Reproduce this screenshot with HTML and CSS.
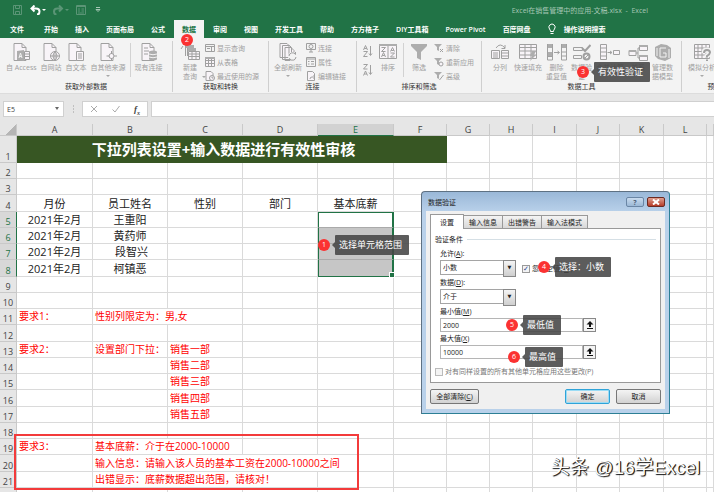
FILE: index.html
```
<!DOCTYPE html>
<html lang="zh-CN">
<head>
	<meta charset="UTF-8">
	<title>Excel在销售管理中的应用-文稿.xlsx - Excel</title>
	<meta name="viewport" content="width=device-width, initial-scale=1.0">
	<link rel="stylesheet" href="styles.css">
</head>
<body>
<svg class="defs" aria-hidden="true">
	<symbol id="page" viewBox="0 0 18 18"><path class="f" d="M2 .5h8l4 4v13H2z"/><path d="M10 .5v4h4"/></symbol>
	<symbol id="up" viewBox="0 0 8 8"><path class="k" d="M4 0l3.500 3.500H5V6H3V3.500H.5zM1 7h6v1H1z"/></symbol>
</svg>
<div class="app">
	<header class="titlebar">
		<div class="quick">
			<button class="dim" aria-label="保存"><svg width="10" height="10" viewBox="0 0 10 10"><path d="M.5.5h8v9h-8zM2.500.5v3h4v-3M2.500 9.500v-3h4v3"/></svg></button>
			<button aria-label="撤消"><svg width="16" height="10" viewBox="0 0 16 10"><path class="bold" d="M4.500.5L1.500 3.500l3 3M1.500 3.500h4.500q3.500 0 3.500 3t-2.500 3"/><path class="w" d="M12 4h4l-2 2z"/></svg></button>
			<button class="dim" aria-label="恢复"><svg width="16" height="10" viewBox="0 0 16 10"><path class="bold" d="M6 .5l3 3-3 3M9 3.500H4.500Q1 3.500 1 6.500t2.500 3"/><path class="w" d="M12 4h4l-2 2z"/></svg></button>
			<button class="dim" aria-label="记录单"><svg width="10" height="10" viewBox="0 0 10 10"><path d="M.5.5h9v9h-9zM0 1.500h10M2 4h2M5.500 4H8M2 6h2M5.500 6H8M2 8h6"/></svg></button>
			<button class="more" aria-label="自定义"><svg width="6" height="6" viewBox="0 0 6 6"><path d="M1 .5h4M1 2.500h4l-2 2z"/></svg></button>
		</div>
		<h1>Excel在销售管理中的应用-文稿.xlsx &nbsp;-&nbsp; Excel</h1>
	</header>
	<nav class="tabs">
		<button class="file">文件</button>
		<button>开始</button>
		<button>插入</button>
		<button>页面布局</button>
		<button>公式</button>
		<button class="on">数据</button>
		<button>审阅</button>
		<button>视图</button>
		<button>开发工具</button>
		<button>帮助</button>
		<button>方方格子</button>
		<button>DIY工具箱</button>
		<button>Power Pivot</button>
		<button>百度网盘</button>
		<button class="tell"><svg width="8" height="12" viewBox="0 0 8 12"><path d="M2.500 8.500Q2.500 7 1.500 6A3.100 3.100 0 1 1 6.500 6Q5.500 7 5.500 8.500zM2.500 10.500h3"/></svg>操作说明搜索</button>
	</nav>

	<section class="ribbon">
		<div class="group g-ext">
			<div class="tools">
				<button class="big"><svg width="18" height="18" viewBox="0 0 18 18"><use href="#page"/><path class="d" d="M5 8l7-1v11l-7-1z"/><path class="l" d="M7 15l1.500-5 1.500 5M7.500 13.500h2"/><path class="f" d="M12.500 8.500h5v8h-5zM12.500 11h5M12.500 13.500h5"/></svg>自 Access</button>
				<button class="big"><svg width="18" height="18" viewBox="0 0 18 18"><use href="#page"/><circle class="f" cx="13" cy="13" r="4.500"/><path d="M8.500 13h9M13 8.500v9M13 8.500q-4 4.500 0 9q4-4.500 0-9"/></svg>自网站</button>
				<button class="big"><svg width="18" height="18" viewBox="0 0 18 18"><use href="#page"/><path class="f" d="M9.500 8.500h7v9h-7zM11 11h4M11 13h4M11 15h4"/></svg>自文本</button>
				<button class="big"><svg width="18" height="18" viewBox="0 0 18 18"><use href="#page"/><circle class="f" cx="12.500" cy="13" r="2.500"/><path d="M12.500 8v3M12.500 15v3M7.500 13h3M15 13h3"/></svg>自其他来源<i class="drop"></i></button>
				<hr>
				<button class="big"><svg width="18" height="18" viewBox="0 0 18 18"><use href="#page"/><path d="M4 5h4M4 8h5M4 11h4"/><path class="d" d="M9 8.500q4.500-2 8 0v8q-3.500 2-8 0z"/><path class="l" d="M9 11q4 1.500 8 0M9 14q4 1.500 8 0"/></svg>现有连接</button>
			</div>
			<h2>获取外部数据</h2>
		</div>
		<div class="group g-get">
			<div class="tools">
				<button class="big"><svg width="20" height="18" viewBox="0 0 20 18"><path class="d" d="M5 2h9v3H5zM7 5h9v3H7z"/><path d="M1 6l2-3M5.500 2v11M7.500 5v8"/><path class="f" d="M8.500 8.500h11v8h-11zM8.500 11h11M8.500 13.500h11M12 8.500v8M16 8.500v8"/></svg>新建<br>查询<i class="drop side"></i></button>
				<div class="list">
					<button><svg width="10" height="10" viewBox="0 0 10 10"><path d="M.5 1.500h9v7h-9zM.5 3.500h9M6.500 3.500v5M2 5.500h3"/></svg>显示查询</button>
					<button><svg width="10" height="10" viewBox="0 0 10 10"><path class="f" d="M.5.5h9v9h-9zM.5 3.500h9M.5 6.500h9M3.500.5v9M6.500.5v9"/><path class="d" d="M0 0h10v2H0z"/></svg>从表格</button>
					<button><svg width="10" height="10" viewBox="0 0 10 10"><path class="f" d="M1 .5h5l2 2v7H1z"/><circle class="f" cx="7" cy="7" r="2.500"/><path d="M7 5.500V7h1.500"/></svg>最近使用的源</button>
				</div>
			</div>
			<h2>获取和转换</h2>
		</div>
		<div class="group g-link">
			<div class="tools">
				<button class="big"><svg width="18" height="18" viewBox="0 0 18 18"><path class="f" d="M1 .5h7l2 2v12H1zM3.500 2.500h7l2 2v12h-9zM6 4.500h6l3 3v10H6z"/><circle class="bg" cx="13.500" cy="13.500" r="4.500"/><path d="M10 13a3.500 3.500 0 0 1 6.500-1.500V9M17 14a3.500 3.500 0 0 1-6.500 1.500V18"/></svg>全部刷新<i class="drop"></i></button>
				<div class="list">
					<button><svg width="10" height="10" viewBox="0 0 10 10"><path d="M.5.5h9v6h-9z"/><circle cx="5" cy="3.500" r="2"/><path d="M5 6v3M3 9h4"/></svg>连接</button>
					<button><svg width="10" height="10" viewBox="0 0 10 10"><path d="M.5.5h9v9h-9zM.5 2h9M2 4.500h1.500M5 4.500h3M2 7h1.500M5 7h3"/></svg>属性</button>
					<button><svg width="10" height="10" viewBox="0 0 10 10"><path class="f" d="M1.500.5h5l2 2v7h-7z"/><path d="M4 8q0-2 2-2h3M7.500 4.500L9 6 7.500 7.500"/></svg>编辑链接</button>
				</div>
			</div>
			<h2>连接</h2>
		</div>
		<div class="group g-sort">
			<div class="tools">
				<div class="az">
					<button aria-label="升序"><svg width="10" height="12" viewBox="0 0 10 12"><path d="M.5 5L2.500.5l2 4.500M1.200 3.500h2.600M.5 6.500h4l-4 5h4M7.500 1v9M6 8.500l1.500 2L9 8.500"/></svg></button>
					<button aria-label="降序"><svg width="10" height="12" viewBox="0 0 10 12"><path d="M.5.5h4l-4 4.500h4M.5 11.500L2.500 7l2 4.500M1.200 10h2.600M7.500 1v9M6 8.500l1.500 2L9 8.500"/></svg></button>
				</div>
				<button class="big"><svg width="18" height="18" viewBox="0 0 18 18"><path class="f" d="M.5 1.500h17v14H.5zM9 1v15"/><path class="d" d="M0 1h18v2H0z"/><path d="M2.500 4.500h4l-4 4h4M2.500 14l2-4.500 2 4.500M3.200 12.500h2.600M11.500 8.500l2-4 2 4M12.200 7.500h2.600M11.500 10h4l-4 4h4"/></svg>排序</button>
				<hr>
				<button class="big"><svg width="18" height="18" viewBox="0 0 18 18"><path class="d" d="M1 1h16v2l-6 6v8l-4-2V9L1 3z"/></svg>筛选</button>
				<div class="list">
					<button><svg width="10" height="10" viewBox="0 0 10 10"><path class="d" d="M0 1h8L5 4v4L3 7V4z"/><path d="M6 6l3 3M9 6L6 9"/></svg>清除</button>
					<button><svg width="10" height="10" viewBox="0 0 10 10"><path class="d" d="M0 1h8L5 4v4L3 7V4z"/><circle class="f" cx="7" cy="7" r="2"/></svg>重新应用</button>
					<button><svg width="10" height="10" viewBox="0 0 10 10"><path class="d" d="M0 1h8L5 4v4L3 7V4z"/><path d="M9.500 4L5.500 9"/></svg>高级</button>
				</div>
			</div>
			<h2>排序和筛选</h2>
		</div>
		<div class="group g-data">
			<div class="tools">
				<button class="big"><svg width="20" height="18" viewBox="0 0 20 18"><path class="f" d="M1.500 7.500h8v8h-8zM3 10h5M3 12h5M3 14h5M11.500 7.500h7v8h-7zM11.500 10h7M11.500 13h7"/><path d="M6 5q4-6 9 0M15 2v3.500h-3.500"/></svg>分列</button>
				<button class="big"><svg width="20" height="18" viewBox="0 0 20 18"><path class="f" d="M1.500 1.500h17v14h-17zM1.500 4.500h17M1.500 8h17M1.500 12h17M7 1.500v14M13 1.500v14"/><path class="d" d="M14 8h4l-2 4h2l-6 6 2-5h-2z"/></svg>快速填充</button>
				<button class="big"><svg width="20" height="18" viewBox="0 0 20 18"><path class="d" d="M0 1h6v4H0zM0 9h6v4H0zM14 1h6v4h-6z"/><path d="M.5 1v16h5V1M.5 13.500h5M14.500 1v16h5V1M14.500 9h5M14.500 13h5M7 9.500h5M10.500 8l2 1.500-2 1.500"/></svg>删除<br>重复值</button>
				<button class="big"><svg width="18" height="18" viewBox="0 0 18 18"><path d="M.5 4.500h9v3h-9zM.5 12.500h8v3h-8z"/><path class="bold" d="M9 5l3 3 5.500-6"/><circle class="bold" cx="13.500" cy="13.500" r="3"/><path d="M11.500 15.500l4-4"/></svg>数据验<br>证</button>
				<button class="big"><svg width="20" height="18" viewBox="0 0 20 18"><path class="f" d="M.5 1.500h6v15h-6zM.5 5h6M.5 9h6M.5 13h6M13.500 7.500h6v4h-6z"/><path d="M7.500 9.500h4M10 8l2 1.500-2 1.500"/></svg>合并计算</button>
				<button class="big"><svg width="20" height="18" viewBox="0 0 20 18"><path class="f" d="M1 7.500h7v5H1zM11.500 2.500h8v5h-8zM11.500 12.500h8v5h-8z"/><path class="d" d="M1 7h7v2H1zM11 2h8.500v2H11zM11 12h8.500v2H11z"/><path d="M8 10h2V5h1M10 10v5h1"/></svg>关系</button>
				<button class="big"><svg width="18" height="18" viewBox="0 0 18 18"><path class="d" d="M1 4l6-3 6 1 4 3v10l-6 3-7-2-3-3z"/><path class="l" d="M12 5H6v9h6v-4H9M3 5v8M15 6v9"/></svg>管理数<br>据模型</button>
			</div>
			<h2>数据工具</h2>
		</div>
		<div class="group g-what">
			<div class="tools">
				<button class="big"><svg width="18" height="18" viewBox="0 0 18 18"><path class="f" d="M1.500 1.500h15v14h-15zM1.500 5h15M1.500 8.500h15M1.500 12h15M5 1.500v14M9 1.500v14M13 1.500v14"/><path class="halo" d="M11 10q0-3 3-3t3 2.500q0 1.500-3 3.500v1.500"/><path class="bold" d="M11 10q0-3 3-3t3 2.500q0 1.500-3 3.500v1.500M14 16.500v1.500"/></svg>模拟分析<i class="drop"></i></button>
			</div>
			<h2>预测</h2>
		</div>
	</section>

	<div class="formula">
		<div class="namebox"><select aria-label="名称框"><option>E5</option></select></div>
		<span class="dots"></span>
		<div class="fx">
			<button aria-label="取消输入"><svg width="8" height="8" viewBox="0 0 8 8"><path d="M1 1l6 6M7 1L1 7"/></svg></button>
			<button aria-label="输入"><svg width="8" height="8" viewBox="0 0 8 8"><path d="M.5 4.500L3 7l4.500-6"/></svg></button>
			<button class="fn">f<sub>x</sub></button>
		</div>
		<input class="bar" type="text" aria-label="编辑栏">
	</div>

	<main class="sheet">
		<table>
			<colgroup>
				<col class="c-head"><col class="c-e"><col class="c-b"><col class="c-b"><col class="c-b"><col class="c-e"><col class="c-f">
				<col class="c-g"><col class="c-g"><col class="c-i"><col class="c-g"><col class="c-i"><col class="c-g"><col>
			</colgroup>
			<thead>
				<tr><th class="corner"></th><th>A</th><th>B</th><th>C</th><th>D</th><th class="on">E</th><th>F</th><th>G</th><th>H</th><th>I</th><th>J</th><th>K</th><th>L</th><th></th></tr>
			</thead>
			<tbody>
				<tr class="top"><th>1</th><td class="banner" colspan="6">下拉列表设置+输入数据进行有效性审核</td><td></td><td></td><td></td><td></td><td></td><td></td><td></td></tr>
				<tr><th>2</th><td></td><td></td><td></td><td></td><td></td><td></td><td></td><td></td><td></td><td></td><td></td><td></td><td></td></tr>
				<tr><th>3</th><td></td><td></td><td></td><td></td><td></td><td></td><td></td><td></td><td></td><td></td><td></td><td></td><td></td></tr>
				<tr><th>4</th><td>月份</td><td>员工姓名</td><td>性别</td><td>部门</td><td>基本底薪</td><td></td><td></td><td></td><td></td><td></td><td></td><td></td><td></td></tr>
				<tr class="on"><th>5</th><td>2021年2月</td><td>王重阳</td><td></td><td></td><td class="sel first"></td><td></td><td></td><td></td><td></td><td></td><td></td><td></td><td></td></tr>
				<tr class="on"><th>6</th><td>2021年2月</td><td>黄药师</td><td></td><td></td><td class="sel"></td><td></td><td></td><td></td><td></td><td></td><td></td><td></td><td></td></tr>
				<tr class="on"><th>7</th><td>2021年2月</td><td>&nbsp;段智兴</td><td></td><td></td><td class="sel"></td><td></td><td></td><td></td><td></td><td></td><td></td><td></td><td></td></tr>
				<tr class="on"><th>8</th><td>2021年2月</td><td>柯镇恶</td><td></td><td></td><td class="sel last"></td><td></td><td></td><td></td><td></td><td></td><td></td><td></td><td></td></tr>
				<tr><th>9</th><td></td><td></td><td></td><td></td><td></td><td></td><td></td><td></td><td></td><td></td><td></td><td></td><td></td></tr>
				<tr><th>10</th><td></td><td></td><td></td><td></td><td></td><td></td><td></td><td></td><td></td><td></td><td></td><td></td><td></td></tr>
				<tr class="note"><th>11</th><td>要求1：</td><td colspan="2">性别列限定为：男,女</td><td></td><td></td><td></td><td></td><td></td><td></td><td></td><td></td><td></td><td></td></tr>
				<tr><th>12</th><td></td><td></td><td></td><td></td><td></td><td></td><td></td><td></td><td></td><td></td><td></td><td></td><td></td></tr>
				<tr class="note"><th>13</th><td>要求2：</td><td>设置部门下拉：</td><td>销售一部</td><td></td><td></td><td></td><td></td><td></td><td></td><td></td><td></td><td></td><td></td></tr>
				<tr class="note"><th>14</th><td></td><td></td><td>销售二部</td><td></td><td></td><td></td><td></td><td></td><td></td><td></td><td></td><td></td><td></td></tr>
				<tr class="note"><th>15</th><td></td><td></td><td>销售三部</td><td></td><td></td><td></td><td></td><td></td><td></td><td></td><td></td><td></td><td></td></tr>
				<tr class="note"><th>16</th><td></td><td></td><td>销售四部</td><td></td><td></td><td></td><td></td><td></td><td></td><td></td><td></td><td></td><td></td></tr>
				<tr class="note"><th>17</th><td></td><td></td><td>销售五部</td><td></td><td></td><td></td><td></td><td></td><td></td><td></td><td></td><td></td><td></td></tr>
				<tr><th>18</th><td></td><td></td><td></td><td></td><td></td><td></td><td></td><td></td><td></td><td></td><td></td><td></td><td></td></tr>
				<tr class="note"><th>19</th><td>要求3：</td><td colspan="2">基本底薪：介于在2000-10000</td><td></td><td></td><td></td><td></td><td></td><td></td><td></td><td></td><td></td><td></td></tr>
				<tr class="note"><th>20</th><td></td><td colspan="4">输入信息：请输入该人员的基本工资在2000-10000之间</td><td></td><td></td><td></td><td></td><td></td><td></td><td></td><td></td></tr>
				<tr class="note"><th>21</th><td></td><td colspan="3">出错显示：底薪数据超出范围，请核对！</td><td></td><td></td><td></td><td></td><td></td><td></td><td></td><td></td><td></td></tr>
				<tr><th></th><td></td><td></td><td></td><td></td><td></td><td></td><td></td><td></td><td></td><td></td><td></td><td></td><td></td></tr>
			</tbody>
		</table>
	</main>

	<div class="frame"></div>

	<section class="dialog" role="dialog" aria-label="数据验证">
		<div class="caption">
			<h3>数据验证</h3>
			<button class="help" aria-label="帮助">?</button>
			<button class="close" aria-label="关闭"><svg width="8" height="6" viewBox="0 0 8 6"><path d="M1 .5l6 5M7 .5l-6 5"/></svg></button>
		</div>
		<form class="inner">
			<div class="dtabs">
				<button type="button" class="on">设置</button>
				<button type="button">输入信息</button>
				<button type="button">出错警告</button>
				<button type="button">输入法模式</button>
			</div>
			<div class="panel">
				<div class="legend">验证条件</div>
				<div class="fields">
					<label for="allow">允许(<u>A</u>):</label>
					<div class="row">
						<div class="combo"><select id="allow"><option>小数</option></select></div>
						<label class="check"><input type="checkbox" checked>忽略空值(<u>B</u>)</label>
					</div>
					<label for="data">数据(<u>D</u>):</label>
					<div class="combo"><select id="data"><option>介于</option></select></div>
					<label for="min">最小值(<u>M</u>)</label>
					<div class="ref"><input id="min" type="text" value="2000"><button type="button" aria-label="选择区域"><svg width="8" height="8"><use href="#up"/></svg></button></div>
					<label for="max">最大值(<u>X</u>)</label>
					<div class="ref"><input id="max" type="text" value="10000"><button type="button" aria-label="选择区域"><svg width="8" height="8"><use href="#up"/></svg></button></div>
				</div>
				<label class="check off"><input type="checkbox" disabled>对有同样设置的所有其他单元格应用这些更改(P)</label>
			</div>
			<div class="actions">
				<button type="button" class="clear">全部清除(<u>C</u>)</button>
				<button type="button" class="ok">确定</button>
				<button type="button">取消</button>
			</div>
		</form>
	</section>

	<div class="callout n1"><b>1</b><span>选择单元格范围</span></div>
	<div class="callout n2"><b>2</b></div>
	<div class="callout n3"><b>3</b><span>有效性验证</span></div>
	<div class="callout n4"><b>4</b><span>选择：小数</span></div>
	<div class="callout n5"><b>5</b><span>最低值</span></div>
	<div class="callout n6"><b>6</b><span>最高值</span></div>
	<div class="mark">头条 @16学Excel</div>
</div>
</body>
</html>
```
FILE: styles.css
```
*{
	margin:0;
	padding:0;
	box-sizing:border-box;
}
html,body{
	height:100%;
	overflow:hidden;
}
body,button,input,select{
	font-family:"Open Sans","Noto Sans CJK SC",sans-serif;
	font-size:7px;
	line-height:9px;
}
button{
	border:none;
	background:none;
	color:inherit;
	white-space:nowrap;
}
svg{
	display:block;
	flex:none;
	fill:none;
	stroke:currentColor;
}
.defs{
	position:absolute;
	width:0;
	height:0;
}
.app{
	position:relative;
	height:100%;
	display:flex;
	flex-direction:column;
	overflow:hidden;
	background:#e6e6e6;
}

/* title bar and tabs */
.titlebar{
	flex:none;
	height:20px;
	display:flex;
	align-items:center;
	justify-content:space-between;
	padding:0 66px 0 13px;
	background:#217346;
	color:#fff;
}
.titlebar h1{
	font-size:7px;
	font-weight:normal;
	color:#a6c7b5;
}
.quick{
	display:flex;
	align-items:center;
	gap:7px;
}
.quick .dim{
	color:#5b9576;
}
.quick .more{
	color:#a6c7b5;
	margin-left:2px;
}
.bold{
	stroke-width:2;
}
.w{
	fill:currentColor;
	stroke:none;
}
.tabs{
	flex:none;
	height:18px;
	display:flex;
	gap:1px;
	background:#217346;
	color:#fff;
}
.tabs button{
	padding:0 8px;
	font-weight:600;
}
.tabs .file{
	padding:0 11px 0 10px;
}
.tabs .on{
	background:#f3f3f3;
	color:#217346;
}
.tabs .tell{
	display:flex;
	align-items:center;
	gap:8px;
}

/* ribbon */
.ribbon{
	height:56px;
	flex:none;
	display:flex;
	overflow:hidden;
	background:#f3f3f3;
	border-bottom:1px solid #dcdcdc;
	color:#a0a0a0;
}
.group{
	flex:none;
	display:flex;
	flex-direction:column;
	justify-content:space-between;
	margin:3px 0 1px;
	border-right:1px solid #cfcfcf;
}
.g-ext{width:173px;}
.g-get{width:96px;}
.g-link{width:88px;}
.g-sort{width:125px;}
.g-data{width:200px;}
.g-what{width:66px;}
.group h2{
	font-size:7px;
	line-height:10px;
	font-weight:normal;
	text-align:center;
	color:#333;
}
.tools{
	display:flex;
	align-items:flex-start;
	gap:4px;
	padding:2px 0 0 6px;
}
.tools hr{
	width:1px;
	height:34px;
	border:none;
	background:#d2d2d2;
}
.big{
	display:flex;
	flex-direction:column;
	align-items:center;
	position:relative;
}
.big svg{
	margin-bottom:2px;
}
.drop{
	border:2px solid transparent;
	border-top-color:#a8a8a8;
	border-bottom:none;
	margin-top:3px;
}
.drop.side{
	position:absolute;
	right:-6px;
	bottom:3px;
}
.list{
	display:flex;
	flex-direction:column;
	gap:4px;
}
.list button{
	height:10px;
	display:flex;
	align-items:center;
	gap:2px;
}
.f{fill:#f8f4f8;}
.d{fill:#adadad;stroke:none;}
.l{stroke:#f3f3f3;}
.bg{fill:#f3f3f3;stroke:none;}
.halo{stroke:#f3f3f3;stroke-width:5;}
.k{fill:#111;stroke:none;}
.g-get .tools{
	gap:5px;
	padding-left:7px;
}
.g-link .tools{
	padding-left:5px;
}
.az{
	display:flex;
	flex-direction:column;
	gap:7px;
	padding-top:2px;
}
.g-sort .tools{
	gap:6px;
}
.g-data .tools{
	padding-left:8px;
}

/* formula bar */
.formula{
	flex:none;
	height:30px;
	display:flex;
	align-items:stretch;
	padding:7px 0;
	gap:3px;
}
.namebox{
	width:61px;
	margin-left:3px;
	background:#fff;
	border:1px solid #d0d0d0;
	position:relative;
}
.namebox select{
	width:100%;
	height:100%;
	appearance:none;
	border:none;
	background:none;
	padding-left:3px;
	color:#444;
}
.namebox::after{
	content:'';
	position:absolute;
	right:4px;
	top:5px;
	border:2px solid transparent;
	border-top:3px solid #666;
	border-bottom:none;
	pointer-events:none;
}
.dots{
	width:12px;
	margin:4px 0;
	background:radial-gradient(circle,#999 1px,transparent 1px) center/3px 3px repeat-y;
}
.fx{
	width:66px;
	display:flex;
	align-items:center;
	justify-content:space-around;
	background:#fff;
	border:1px solid #d0d0d0;
	color:#aaa;
}
.fx .fn{
	font:italic bold 9px/10px "Liberation Serif",serif;
	color:#444;
}
.fn sub{
	font-size:6px;
	line-height:1px;
}
.bar{
	flex:1;
	min-width:0;
	background:#fff;
	border:1px solid #d0d0d0;
	border-right:none;
	padding:0 4px;
}

/* sheet */
.sheet{
	flex:none;
	background:#fff;
}
table{
	width:100%;
	table-layout:fixed;
	border-collapse:separate;
	border-spacing:0;
}
.c-head{width:17px;}
.c-b{width:75px;}
.c-e{width:76px;}
.c-f{width:53px;}
.c-g{width:43px;}
.c-i{width:44px;}
tr{
	height:16px;
}
tbody tr:nth-child(4n){
	height:17px;
}
tbody .top{
	height:27px;
}
thead tr{
	height:12px;
}
th{
	background:#e6e6e6;
	border-right:1px solid #c9c9c9;
	border-bottom:1px solid #c9c9c9;
	font-size:9px;
	line-height:11px;
	font-weight:normal;
	color:#444;
	vertical-align:bottom;
}
thead th.on{
	background:#d2d2d2;
	color:#217346;
	border-bottom:1px solid #217346;
}
tr.on th{
	background:#d8d8d8;
	color:#217346;
	border-right:1px solid #217346;
}
.corner{
	background:linear-gradient(135deg,#e6e6e6 60%,#b5b5b5 60%);
}
td{
	border-right:1px solid #dadada;
	border-bottom:1px solid #dadada;
	font-size:11px;
	line-height:15px;
	text-align:center;
	vertical-align:middle;
	white-space:nowrap;
	color:#222;
}
.note td{
	font-size:10px;
	text-align:left;
	padding-left:2px;
	color:#f00;
}
td.banner{
	padding-right:16px;
	background:#375623;
	border-color:#375623;
	font-size:15px;
	line-height:24px;
	font-weight:bold;
	color:#fff;
}
td.sel{
	position:relative;
	background:#c6c6c6;
	border-right:2px solid #217346;
	border-left:1px solid #217346;
	border-bottom-color:#aaa;
}
td.first{
	background:#fff;
	border-top:1px solid #217346;
}
td.last{
	border-bottom:1px solid #217346;
}
td.last::after{
	content:'';
	position:absolute;
	right:-3px;
	bottom:-2px;
	width:4px;
	height:4px;
	background:#217346;
	border:1px solid #fff;
	box-sizing:content-box;
}
.frame{
	position:absolute;
	left:14px;
	top:434px;
	width:345px;
	height:56px;
	border:2px solid #f33b3b;
}

/* data validation dialog */
.dialog{
	position:absolute;
	left:421px;
	top:191px;
	width:249px;
	padding:0 4px 4px;
	background:linear-gradient(#9ab8d8,#b9d1ea 20px);
	border:1px solid #2c7f95;
	border-left-color:#5e7183;
	border-top-color:#5e7183;
	border-radius:4px 4px 0 0;
	color:#222;
}
.caption{
	height:19px;
	display:flex;
	align-items:center;
	gap:3px;
	padding:1px 0 0 2px;
}
.caption h3{
	flex:1;
	font-size:7px;
	font-weight:normal;
}
.caption button{
	width:18px;
	height:10px;
	display:flex;
	align-items:center;
	justify-content:center;
	border:1px solid #6a86a5;
	border-radius:2px;
	background:linear-gradient(#c9dbee,#9bb8d6);
	font-weight:bold;
	color:#4a5f78;
}
.caption .close{
	border-color:#6b2a22;
	background:linear-gradient(#e0a090,#b53c28);
	color:#fff;
}
.close svg{
	stroke-width:2;
}
.inner{
	display:block;
	padding:3px 4px 5px;
	background:#f0f0f0;
}
.dtabs{
	display:flex;
	align-items:flex-end;
}
.dtabs button{
	height:13px;
	padding:0 5px;
	border:1px solid #999;
	border-left:none;
	border-bottom:none;
	background:linear-gradient(#f4f4f4,#d8d8d8);
}
.dtabs .on{
	height:15px;
	padding:0 9px;
	border-left:1px solid #999;
	background:#fff;
	margin-bottom:-1px;
}
.panel{
	height:155px;
	padding:6px 4px 0;
	background:#fff;
	border:1px solid #999;
}
.legend{
	display:flex;
	align-items:center;
	gap:4px;
}
.legend::after{
	content:'';
	flex:1;
	height:1px;
	background:#d5dfe5;
}
.fields{
	display:flex;
	flex-direction:column;
	padding:4px 0 0 5px;
}
.fields > label{
	height:12px;
	line-height:12px;
}
.row{
	display:flex;
	align-items:center;
	gap:6px;
}
.combo{
	position:relative;
	width:76px;
	height:15px;
	margin:0 0 2px;
}
.combo select{
	width:100%;
	height:100%;
	appearance:none;
	border:1px solid #a5a5a5;
	background:#fff;
	padding-left:2px;
	color:#222;
}
.combo::after{
	content:'▼';
	position:absolute;
	right:0;
	top:0;
	width:11px;
	height:15px;
	border:1px solid #888;
	background:linear-gradient(#f4f4f4,#cfcfcf);
	font:5px/13px "DejaVu Sans",sans-serif;
	text-align:center;
	pointer-events:none;
}
.check{
	display:flex;
	align-items:center;
	gap:2px;
}
.check input{
	appearance:none;
	width:8px;
	height:8px;
	border:1px solid #9a9a9a;
	background:#f4f4f4;
}
.check input:checked::after{
	content:'✓';
	display:block;
	font:bold 7px/6px "DejaVu Sans",sans-serif;
	color:#2b3f8c;
}
.check.off{
	margin-top:7px;
	color:#777;
}
.check.off input{
	border-color:#bbb;
}
.ref{
	width:156px;
	height:14px;
	display:flex;
	margin-bottom:1px;
}
.ref input{
	flex:1;
	min-width:0;
	border:1px solid #b5b5b5;
	padding-left:2px;
	color:#222;
}
.ref button{
	width:13px;
	display:flex;
	align-items:center;
	justify-content:center;
	border:1px solid #888;
	background:#f4f4f4;
}
.actions{
	display:flex;
	gap:6px;
	padding-top:6px;
}
.actions button{
	width:45px;
	height:15px;
	border:1px solid #777;
	border-radius:2px;
	background:linear-gradient(#f4f4f4,#d2d2d2);
}
.actions .clear{
	width:49px;
	margin-right:auto;
}
.actions .ok{
	border-color:#2fa3d8;
	box-shadow:inset 0 0 0 1px #9bdcf5;
}

/* numbered callouts lying over the window */
.callout{
	position:absolute;
	height:20px;
	display:flex;
	align-items:center;
	gap:5px;
	color:#fff;
}
.callout b{
	width:12px;
	height:12px;
	border-radius:50%;
	background:#fb3232;
	font-weight:normal;
	line-height:12px;
	text-align:center;
}
.callout span{
	position:relative;
	padding:0 7px 0 4px;
	border-radius:1px;
	background:rgba(70,70,70,.88);
	font-size:9px;
	line-height:20px;
}
.callout span::before{
	content:'';
	position:absolute;
	left:-3px;
	top:7px;
	border:3px solid transparent;
	border-right-color:rgba(70,70,70,.88);
	border-left:none;
}
.n1{left:318px;top:235px;}
.n2{left:181px;top:30px;}
.n3{left:577px;top:62px;}
.n4{left:538px;top:257px;}
.n5{left:506px;top:315px;}
.n6{left:508px;top:347px;}
.mark{
	position:absolute;
	right:14px;
	bottom:12px;
	font:19px/24px "Liberation Sans","Noto Sans CJK SC",sans-serif;
	color:#fff;
	text-shadow:1px 1px 1px #111,1px 0 0 #333;
}
```
